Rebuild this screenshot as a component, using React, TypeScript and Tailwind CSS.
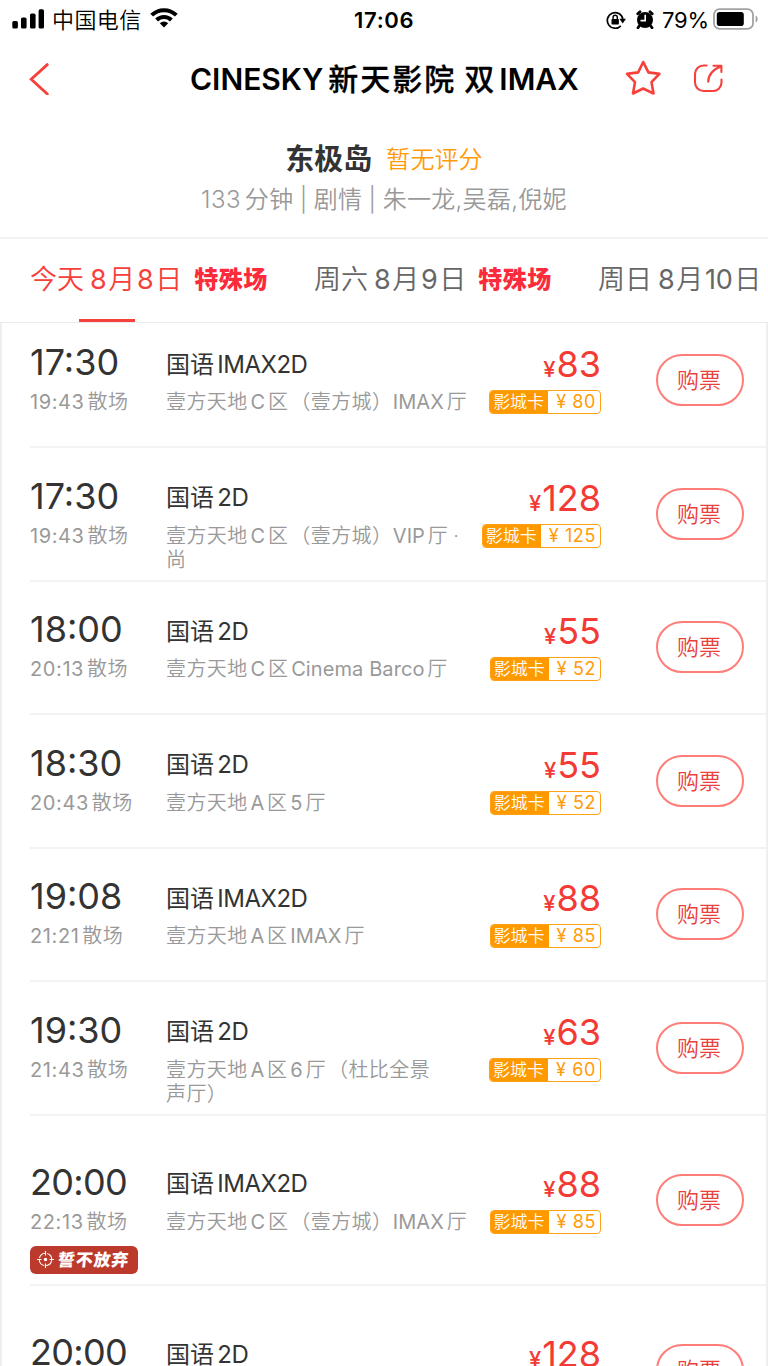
import React from "react";

type Show = {
  time: string;
  end?: string;
  version: string;
  hall?: string[];
  price: string;
  card?: string;
  promo?: boolean;
  tall?: boolean;
};

const SHOWS: Show[] = [
  { time: "17:30", end: "19:43散场", version: "国语IMAX2D", hall: ["壹方天地C区（壹方城）IMAX厅"], price: "83", card: "80" },
  { time: "17:30", end: "19:43散场", version: "国语2D", hall: ["壹方天地C区（壹方城）VIP厅·", "尚"], price: "128", card: "125" },
  { time: "18:00", end: "20:13散场", version: "国语2D", hall: ["壹方天地C区Cinema Barco厅"], price: "55", card: "52" },
  { time: "18:30", end: "20:43散场", version: "国语2D", hall: ["壹方天地A区5厅"], price: "55", card: "52" },
  { time: "19:08", end: "21:21散场", version: "国语IMAX2D", hall: ["壹方天地A区IMAX厅"], price: "88", card: "85" },
  { time: "19:30", end: "21:43散场", version: "国语2D", hall: ["壹方天地A区6厅（杜比全景", "声厅）"], price: "63", card: "60" },
  { time: "20:00", end: "22:13散场", version: "国语IMAX2D", hall: ["壹方天地C区（壹方城）IMAX厅"], price: "88", card: "85", promo: true, tall: true },
  { time: "20:00", version: "国语2D", price: "128", tall: true },
];

/* Adds a thin gap where Latin runs meet Chinese characters. */
function Mixed({ text, className = "", tight = false }: { text: string; className?: string; tight?: boolean }) {
  const parts = text.split(/([A-Za-z0-9: ]+|·|（)/).filter(Boolean);
  return (
    <>
      {parts.map((p, i) => {
        if (p === "·") return <span key={i} className="ml-[0.25em]">{p}</span>;
        if (p === "（") return <span key={i} className="ml-[0.1em]">{p}</span>;
        const latin = /^[A-Za-z0-9: ]+$/.test(p);
        if (!latin) return <span key={i}>{p}</span>;
        const afterParen = i > 0 && parts[i - 1].endsWith("）");
        const left = i > 0 ? (tight ? "ml-[0.07em]" : afterParen ? "ml-[0.02em]" : "ml-[0.14em]") : "";
        const right = i < parts.length - 1 ? (tight ? "mr-[0.07em]" : "mr-[0.14em]") : "";
        return (
          <span key={i} className={`${className} ${left} ${right}`}>
            {p}
          </span>
        );
      })}
    </>
  );
}

function StatusBar() {
  return (
    <div className="flex h-10 items-center text-black">
      <svg className="-mt-0.5 ml-3 h-5 w-8 shrink-0" viewBox="0 0 32 20">
        <rect x="0.3" y="12" width="5.6" height="7.5" rx="1.6" />
        <rect x="9" y="8.5" width="5.6" height="11" rx="1.6" />
        <rect x="18" y="4.5" width="5.6" height="15" rx="1.6" />
        <rect x="26.6" y="0.3" width="5.4" height="19.2" rx="1.6" />
      </svg>
      <span className="ml-2 w-[90px] text-[22px] font-[350] leading-10 tracking-[0.4px]">中国电信</span>
      <svg className="-mt-1 ml-2 h-5 w-7 shrink-0" viewBox="0 0 28 20" fill="none" stroke="black" strokeWidth="4">
        <path d="M1.7 7.2a17.5 17.5 0 0 1 24.6 0" />
        <path d="M6.6 12a10.6 10.6 0 0 1 14.8 0" />
        <path d="M14 19.5l-4.2-4.2a6 6 0 0 1 8.4 0z" fill="black" stroke="none" />
      </svg>
      <span className="ml-[176px] w-[62px] text-[22px] font-semibold leading-10 tracking-[0.7px]">17:06</span>
      <svg className="ml-[190px] h-5 w-5 shrink-0" viewBox="0 0 20 20" fill="none" stroke="black" strokeWidth="1.7">
        <path d="M14.8 15.8A7.8 7.8 0 1 1 16.8 9" />
        <path d="M13.4 8.8h6.600l-3.300 4.600z" fill="black" stroke="none" />
        <rect x="5.5" y="9" width="7.4" height="5.6" rx="0.8" fill="black" stroke="none" />
        <path d="M7.1 9.5V7.3a2.1 2.1 0 0 1 4.2 0v2.2" strokeWidth="1.4" />
      </svg>
      <svg className="-mt-0.5 ml-2.5 h-[19px] w-[18px] shrink-0" viewBox="0 0 18 19">
        <circle cx="9" cy="10" r="8" />
        <path d="M1.8 3.8L4 1.8M16.2 3.8l-2.2-2M3.4 15.8L2 17.8M14.6 15.8l1.4 2" stroke="black" strokeWidth="2.8" strokeLinecap="round" />
        <path d="M9.2 4.8v5.800H4.500" fill="none" stroke="white" strokeWidth="1.6" />
      </svg>
      <span className="ml-2 w-[48px] whitespace-nowrap text-[22px] leading-10 tracking-[-0.2px]">79%</span>
      <svg className="-mt-0.5 ml-[3px] h-[22px] w-[46px] shrink-0" viewBox="0 0 46 22">
        <rect x="1" y="1.2" width="39" height="19.6" rx="5.4" fill="none" stroke="#a2a2a2" strokeWidth="1.8" />
        <rect x="3.8" y="4" width="27" height="14" rx="2.8" />
        <path d="M42.6 7.4c2.7 1 2.7 6 0 7.2z" fill="#a2a2a2" />
      </svg>
    </div>
  );
}

function Header() {
  return (
    <header className="flex h-[78px] items-center">
      <svg className="ml-[29px] h-8 w-5 shrink-0" viewBox="0 0 20 32" fill="none" stroke="#f8403b" strokeWidth="2.8" strokeLinecap="round">
        <path d="M18.3 1.6L2.2 16.2 18.3 31" />
      </svg>
      <h1 className="ml-[141px] flex w-[400px] items-baseline whitespace-nowrap text-[30px] font-semibold leading-10 text-black">
        <span>CINESKY</span>
        <span className="ml-[5px] font-medium tracking-[2px] [-webkit-text-stroke:0.3px_black]">新天影院</span>
        <span className="ml-[8px] font-medium [-webkit-text-stroke:0.3px_black]">双</span>
        <span className="ml-[5px]">IMAX</span>
      </h1>
      <svg className="-mt-0.5 ml-[35px] h-9 w-9 shrink-0" viewBox="0 0 36 36" fill="none" stroke="#f8403b" strokeWidth="2.6" strokeLinejoin="round">
        <path d="M18.2 2l5.2 10.4 11 1.5-7.9 8.2 2 11.4-10.3-5L8 33.5l2-11.4-8-8.2 11.2-1.5z" />
      </svg>
      <svg className="ml-8 h-[30px] w-[30px] shrink-0" viewBox="0 0 30 30" fill="none" stroke="#f8403b" strokeWidth="2.1" strokeLinecap="round" strokeLinejoin="round">
        <path d="M13.5 1.5H10.5A8.5 8.5 0 0 0 2 10V18.5A8.5 8.5 0 0 0 10.5 27H19.5A8.5 8.5 0 0 0 28.5 18.5V15.5" />
        <path d="M15.2 17.8C15.2 11 20 5.500 28 2.200M20.500 1.800h7.900V8" />
      </svg>
    </header>
  );
}

function Movie() {
  return (
    <section className="h-[121px] border-b-2 border-[#f3f3f3] pt-[24px]">
      <div className="flex h-9 items-center justify-center whitespace-nowrap">
        <span className="text-[29px] font-bold leading-9 text-[#333]">东极岛</span>
        <span className="ml-[14px] text-[24px] font-[350] leading-9 tracking-[0.1px] text-[#ff9b07]">暂无评分</span>
      </div>
      <div className="mt-1 flex h-9 items-center justify-center whitespace-nowrap text-[24px] font-[350] leading-9 text-[#999]">
        <span className="tracking-[0.4px]">133</span>
        <span className="ml-[4px] tracking-[0.3px] [word-spacing:-0.8px]">分钟 | 剧情 | 朱一龙,吴磊,倪妮</span>
      </div>
    </section>
  );
}

function DateTab({ day, date, active, special }: { day: string; date: string; active?: boolean; special?: boolean }) {
  return (
    <div className={`flex h-[82px] shrink-0 items-center whitespace-nowrap text-[27px] font-[350] ${active ? "text-[#f5403b]" : "text-[#666]"}`}>
      <span className="leading-10">{day}</span>
      <span className="ml-[6px] leading-10">
        <Mixed text={date} className="font-normal tracking-[-0.4px]" tight />
      </span>
      {special && <span className="ml-[12px] text-[24px] font-black leading-10 tracking-[0.5px] text-[#fb2b3c]">特殊场</span>}
    </div>
  );
}

function Tabs() {
  return (
    <nav className="relative flex h-[84px] overflow-hidden border-b border-[#ebebeb] pl-[30px]">
      <div className="w-[284px] shrink-0">
        <DateTab day="今天" date="8月8日" active special />
      </div>
      <div className="w-[284px] shrink-0">
        <DateTab day="周六" date="8月9日" special />
      </div>
      <DateTab day="周日" date="8月10日" />
      <div className="absolute bottom-0 left-[79px] h-[3px] w-14 bg-[#f5403b]" />
    </nav>
  );
}

function Promo() {
  return (
    <div className="flex h-7 w-[108px] items-center rounded-[6px] bg-[#bb3a2b] pl-[7px] text-white">
      <svg className="h-[17px] w-[17px] shrink-0" viewBox="0 0 17 17" fill="none" stroke="white" strokeWidth="1.1">
        <circle cx="8.5" cy="8.5" r="6.2" strokeDasharray="7.74 2" strokeDashoffset="-1" />
        <path d="M8.5 0v4.500M8.500 12.500V17M0 8.500h4.500M12.500 8.500H17" />
        <circle cx="8.5" cy="8.5" r="1.7" fill="white" stroke="none" />
      </svg>
      <span className="ml-[4px] -skew-x-6 whitespace-nowrap text-[17px] font-black leading-7 tracking-[0.8px]">誓不放弃</span>
    </div>
  );
}

function ShowRow({ show, first }: { show: Show; first: boolean }) {
  const size = show.tall ? "h-[170.4px] pt-[46px]" : first ? "h-[125px] pt-[19px]" : "h-[133.6px] pt-[27.5px]";
  return (
    <li className={`ml-7 flex shrink-0 items-start whitespace-nowrap border-b-2 border-[#f3f3f3] ${size}`}>
      <div className="w-[136px] shrink-0">
        <div className={`h-10 text-[36px] leading-10 text-[#333] ${show.tall ? "tracking-[-0.7px]" : ""}`}>{show.time}</div>
        {show.end && (
          <div className="h-10 text-[20px] font-[350] leading-10 tracking-[0.6px] text-[#999]">
            <Mixed text={show.end} className="font-normal" />
          </div>
        )}
        {show.promo && (
          <div className="mt-1">
            <Promo />
          </div>
        )}
      </div>
      <div className="w-[310px] shrink-0 pt-[2.5px]">
        <div className="h-10 text-[24px] font-[380] leading-10 text-[#333]">
          <Mixed text={show.version} className="tracking-[-0.5px]" />
        </div>
        {show.hall && (
          <div className="pt-[5.5px] text-[20px] font-[350] leading-[24.5px] tracking-[0.4px] text-[#999]">
            {show.hall.map((line) => (
              <div key={line} className="h-[24.5px]">
                <Mixed text={line} className="font-normal tracking-[0.1px]" />
              </div>
            ))}
          </div>
        )}
      </div>
      <div className="flex w-[125px] shrink-0 flex-col items-end pt-[2px]">
        <div className="flex h-10 items-baseline text-[#f33a35]">
          <span className="mr-px text-[22px] font-medium leading-10">¥</span>
          <span className="text-[36px] leading-10">{show.price}</span>
        </div>
        {show.card && (
          <div className="mt-[6px] flex h-6 overflow-hidden rounded-[4px] border-[1.5px] border-[#ffa114] text-[18px] leading-[22px]">
            <span className="w-[58px] bg-[#ff9900] pl-[3px] text-[17px] font-[350] text-white">影城卡</span>
            <span className="pl-[8px] pr-[4px] tracking-[0.6px] text-[#ff9b07]">¥ {show.card}</span>
          </div>
        )}
      </div>
      <button className="ml-[55px] mt-[12px] h-[52px] w-[88px] shrink-0 rounded-full border-2 border-[#ff7d78] pr-0.5 text-[22px] font-[350] leading-[48px] text-[#e9403b]">
        购票
      </button>
    </li>
  );
}

export default function App() {
  return (
    <div className="h-[1366px] w-[768px] overflow-hidden bg-white font-['Inter','Noto_Sans_CJK_SC',sans-serif]">
      <StatusBar />
      <Header />
      <Movie />
      <Tabs />
      <ul className="h-[1043px] overflow-hidden border-x-2 border-[#efefef]">
        {SHOWS.map((show, i) => (
          <ShowRow key={i} show={show} first={i === 0} />
        ))}
      </ul>
    </div>
  );
}
